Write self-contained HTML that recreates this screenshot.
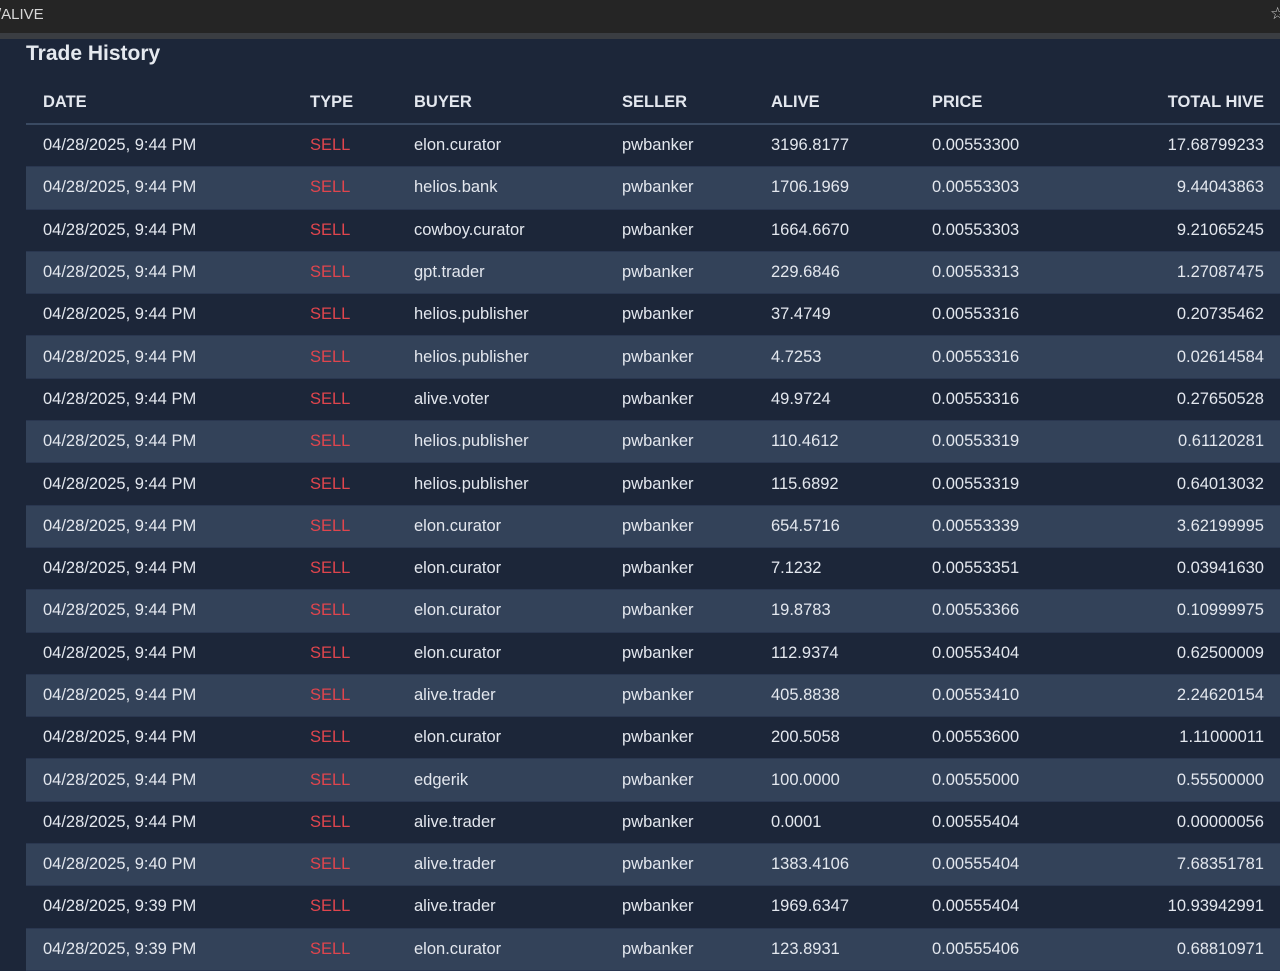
<!DOCTYPE html>
<html><head><meta charset="utf-8">
<style>
html,body{margin:0;padding:0;}
body{width:1280px;height:961px;overflow:hidden;background:#1c2639;font-family:"Liberation Sans",sans-serif;position:relative;}
.top{position:absolute;left:0;top:0;width:1280px;height:33px;background:#252525;}
.top span{position:absolute;left:-3px;top:6px;color:#d8d8d8;font-size:15px;}
.top .star{left:1270px;top:4px;font-size:17px;color:#ccc}
.strip{position:absolute;left:0;top:33px;width:1280px;height:6px;background:#3a3d42;}
h1{position:absolute;left:26px;top:42px;margin:0;font-size:21px;font-weight:bold;color:#e5e9ef;}
table{position:absolute;left:26px;top:81px;width:1254px;border-collapse:collapse;table-layout:fixed;}
th,td{padding:0 0 0 17px;text-align:left;white-space:nowrap;color:#e3e7ee;font-size:16.5px;}
th{height:42px;font-weight:bold;border-bottom:2px solid #3a4a62;}
td{height:41.3px;border-bottom:1px solid #2a3750;}
tr:nth-child(even) td{background:#334259;}
td.s{color:#e0454d;}
th:last-child,td:last-child{text-align:right;padding-right:16px;}
</style></head><body>
<div class="top"><span>/ALIVE</span><span class="star">☆</span></div>
<div class="strip"></div>
<h1>Trade History</h1>
<table>
<colgroup><col style="width:267px"><col style="width:104px"><col style="width:208px"><col style="width:149px"><col style="width:161px"><col style="width:200px"><col></colgroup>
<thead><tr><th>DATE</th><th>TYPE</th><th>BUYER</th><th>SELLER</th><th>ALIVE</th><th>PRICE</th><th>TOTAL HIVE</th></tr></thead>
<tbody>
<tr><td>04/28/2025, 9:44 PM</td><td class="s">SELL</td><td>elon.curator</td><td>pwbanker</td><td>3196.8177</td><td>0.00553300</td><td>17.68799233</td></tr>
<tr><td>04/28/2025, 9:44 PM</td><td class="s">SELL</td><td>helios.bank</td><td>pwbanker</td><td>1706.1969</td><td>0.00553303</td><td>9.44043863</td></tr>
<tr><td>04/28/2025, 9:44 PM</td><td class="s">SELL</td><td>cowboy.curator</td><td>pwbanker</td><td>1664.6670</td><td>0.00553303</td><td>9.21065245</td></tr>
<tr><td>04/28/2025, 9:44 PM</td><td class="s">SELL</td><td>gpt.trader</td><td>pwbanker</td><td>229.6846</td><td>0.00553313</td><td>1.27087475</td></tr>
<tr><td>04/28/2025, 9:44 PM</td><td class="s">SELL</td><td>helios.publisher</td><td>pwbanker</td><td>37.4749</td><td>0.00553316</td><td>0.20735462</td></tr>
<tr><td>04/28/2025, 9:44 PM</td><td class="s">SELL</td><td>helios.publisher</td><td>pwbanker</td><td>4.7253</td><td>0.00553316</td><td>0.02614584</td></tr>
<tr><td>04/28/2025, 9:44 PM</td><td class="s">SELL</td><td>alive.voter</td><td>pwbanker</td><td>49.9724</td><td>0.00553316</td><td>0.27650528</td></tr>
<tr><td>04/28/2025, 9:44 PM</td><td class="s">SELL</td><td>helios.publisher</td><td>pwbanker</td><td>110.4612</td><td>0.00553319</td><td>0.61120281</td></tr>
<tr><td>04/28/2025, 9:44 PM</td><td class="s">SELL</td><td>helios.publisher</td><td>pwbanker</td><td>115.6892</td><td>0.00553319</td><td>0.64013032</td></tr>
<tr><td>04/28/2025, 9:44 PM</td><td class="s">SELL</td><td>elon.curator</td><td>pwbanker</td><td>654.5716</td><td>0.00553339</td><td>3.62199995</td></tr>
<tr><td>04/28/2025, 9:44 PM</td><td class="s">SELL</td><td>elon.curator</td><td>pwbanker</td><td>7.1232</td><td>0.00553351</td><td>0.03941630</td></tr>
<tr><td>04/28/2025, 9:44 PM</td><td class="s">SELL</td><td>elon.curator</td><td>pwbanker</td><td>19.8783</td><td>0.00553366</td><td>0.10999975</td></tr>
<tr><td>04/28/2025, 9:44 PM</td><td class="s">SELL</td><td>elon.curator</td><td>pwbanker</td><td>112.9374</td><td>0.00553404</td><td>0.62500009</td></tr>
<tr><td>04/28/2025, 9:44 PM</td><td class="s">SELL</td><td>alive.trader</td><td>pwbanker</td><td>405.8838</td><td>0.00553410</td><td>2.24620154</td></tr>
<tr><td>04/28/2025, 9:44 PM</td><td class="s">SELL</td><td>elon.curator</td><td>pwbanker</td><td>200.5058</td><td>0.00553600</td><td>1.11000011</td></tr>
<tr><td>04/28/2025, 9:44 PM</td><td class="s">SELL</td><td>edgerik</td><td>pwbanker</td><td>100.0000</td><td>0.00555000</td><td>0.55500000</td></tr>
<tr><td>04/28/2025, 9:44 PM</td><td class="s">SELL</td><td>alive.trader</td><td>pwbanker</td><td>0.0001</td><td>0.00555404</td><td>0.00000056</td></tr>
<tr><td>04/28/2025, 9:40 PM</td><td class="s">SELL</td><td>alive.trader</td><td>pwbanker</td><td>1383.4106</td><td>0.00555404</td><td>7.68351781</td></tr>
<tr><td>04/28/2025, 9:39 PM</td><td class="s">SELL</td><td>alive.trader</td><td>pwbanker</td><td>1969.6347</td><td>0.00555404</td><td>10.93942991</td></tr>
<tr><td>04/28/2025, 9:39 PM</td><td class="s">SELL</td><td>elon.curator</td><td>pwbanker</td><td>123.8931</td><td>0.00555406</td><td>0.68810971</td></tr>
</tbody></table>
</body></html>
